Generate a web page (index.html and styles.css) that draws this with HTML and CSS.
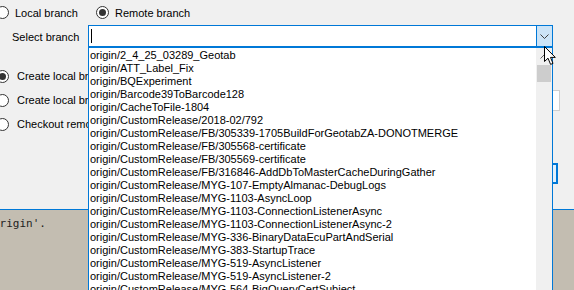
FILE: index.html
```html
<!DOCTYPE html>
<html lang="en">
<head>
    <meta charset="utf-8"/>
    <title>Checkout branch</title>
    <link rel="stylesheet" href="styles.css">
</head>
<body>
    <div class="window">
        <div class="row top">
            <label class="radio"><span class="dot"></span>Local branch</label>
            <label class="radio checked"><span class="dot"></span>Remote branch</label>
        </div>

        <div class="row select">
            <span class="caption">Select branch</span>
            <div class="combo">
                <div class="field"><span class="caret"></span></div>
                <div class="drop">
                    <svg width="9" height="5" viewBox="0 0 9 5"><path d="M0.5 0.5 L4.5 4.5 L8.5 0.5" fill="none" stroke="#404040" stroke-width="1"/></svg>
                </div>

                <div class="list">
                    <div class="items">
                        <div>origin/2_4_25_03289_Geotab</div>
                        <div>origin/ATT_Label_Fix</div>
                        <div>origin/BQExperiment</div>
                        <div>origin/Barcode39ToBarcode128</div>
                        <div>origin/CacheToFile-1804</div>
                        <div>origin/CustomRelease/2018-02/792</div>
                        <div>origin/CustomRelease/FB/305339-1705BuildForGeotabZA-DONOTMERGE</div>
                        <div>origin/CustomRelease/FB/305568-certificate</div>
                        <div>origin/CustomRelease/FB/305569-certificate</div>
                        <div>origin/CustomRelease/FB/316846-AddDbToMasterCacheDuringGather</div>
                        <div>origin/CustomRelease/MYG-107-EmptyAlmanac-DebugLogs</div>
                        <div>origin/CustomRelease/MYG-1103-AsyncLoop</div>
                        <div>origin/CustomRelease/MYG-1103-ConnectionListenerAsync</div>
                        <div>origin/CustomRelease/MYG-1103-ConnectionListenerAsync-2</div>
                        <div>origin/CustomRelease/MYG-336-BinaryDataEcuPartAndSerial</div>
                        <div>origin/CustomRelease/MYG-383-StartupTrace</div>
                        <div>origin/CustomRelease/MYG-519-AsyncListener</div>
                        <div>origin/CustomRelease/MYG-519-AsyncListener-2</div>
                        <div>origin/CustomRelease/MYG-564-BigQueryCertSubject</div>
                    </div>
                    <div class="scrollbar">
                        <div class="arrow">
                            <svg width="9" height="5" viewBox="0 0 9 5"><path d="M0.5 4.5 L4.5 0.5 L8.5 4.5" fill="none" stroke="#606060" stroke-width="1"/></svg>
                        </div>
                        <div class="thumb"></div>
                    </div>
                </div>
            </div>
        </div>

        <div class="options">
            <div class="choices">
                <label class="radio checked"><span class="dot"></span>Create local branch with name:</label>
                <label class="radio"><span class="dot"></span>Create local branch with the remote branch name</label>
                <label class="radio"><span class="dot"></span>Checkout remote branch</label>
            </div>
            <div class="side">
                <div class="textbox"></div>
                <div class="button"></div>
                <div class="grip"></div>
            </div>
        </div>

        <div class="output">
            <pre>origin'.</pre>
        </div>
    </div>

    <svg class="cursor" width="13" height="20" viewBox="0 0 13 20">
        <path d="M0.5 0.5 L0.5 15.5 L4 12.2 L6.6 18.4 L9 17.4 L6.5 11.4 L11.3 11.4 Z" fill="#fff" stroke="#000" stroke-width="1" stroke-linejoin="miter"/>
    </svg>
</body>
</html>
```

FILE: styles.css
```css
*{
    margin: 0;
    padding: 0;
    box-sizing: border-box;
}
body{
    width: 574px;
    height: 290px;
    overflow: hidden;
    background: #f0f0f0;
    font-family: "Liberation Sans", Arial, sans-serif;
    font-size: 11px;
    color: #000;
    position: relative;
}
.window{
    margin-left: -4px;
    width: 600px;
}
.row{
    display: flex;
    align-items: center;
}
.top{
    height: 25px;
    gap: 18px;
}
.radio{
    display: flex;
    align-items: center;
    gap: 6px;
    white-space: nowrap;
}
.dot{
    flex: none;
    width: 13px;
    height: 13px;
    border: 1px solid #333;
    border-radius: 50%;
    background: #fff;
    display: flex;
    align-items: center;
    justify-content: center;
}
.checked .dot::after{
    content: "";
    width: 7px;
    height: 7px;
    border-radius: 50%;
    background: #333;
}
.select{
    height: 23px;
}
.caption{
    width: 92px;
    padding-left: 16px;
}
.combo{
    position: relative;
    display: flex;
    width: 465px;
    height: 23px;
    background: #fff;
    border: 1px solid #0078d7;
    border-bottom-width: 2px;
}
.field{
    flex: 1;
    padding: 3px 0 0 2px;
}
.caret{
    display: block;
    width: 1px;
    height: 14px;
    background: #000;
}
.drop{
    width: 16px;
    background: #cce4f7;
    border-left: 1px solid #0078d7;
    display: flex;
    align-items: center;
    justify-content: center;
    padding-top: 1px;
}
.list{
    position: absolute;
    top: calc(100% + 2px);
    left: -1px;
    width: 465px;
    height: 260px;
    background: #fff;
    border: 1px solid #0078d7;
    border-top: none;
    display: flex;
    z-index: 2;
}
.items{
    flex: 1;
    padding: 1px 0 0 1px;
    line-height: 13px;
    white-space: nowrap;
    overflow: hidden;
}
.scrollbar{
    width: 16px;
    background: #f0f0f0;
    display: flex;
    flex-direction: column;
    align-items: center;
}
.arrow{
    height: 17px;
    display: flex;
    align-items: center;
}
.thumb{
    width: 14px;
    height: 17px;
    background: #cdcdcd;
}
.options{
    display: grid;
    grid-template-columns: 557px 1fr;
    height: 161px;
    padding-top: 16px;
}
.choices{
    display: flex;
    flex-direction: column;
    width: 92px;
    overflow: hidden;
}
.choices .radio{
    height: 24px;
    gap: 8px;
}
.side{
    display: flex;
    flex-direction: column;
}
.textbox{
    margin-top: 26px;
    width: 7px;
    height: 21px;
    background: #fff;
    border: 1px solid #cfcfcf;
    border-left: none;
}
.button{
    margin-top: 52px;
    width: 5px;
    height: 21px;
    background: #e5f1fb;
    border: 2px solid #0078d7;
    border-left: none;
}
.grip{
    margin: 18px 0 0 17px;
    width: 4px;
    height: 6px;
    background: radial-gradient(circle, #b5b5b5 45%, transparent 50%) 0 0 / 2px 2px;
}
.output{
    height: 90px;
    background: #c3bdb1;
    border-top: 1px solid #0078d7;
    padding-top: 7px;
}
.output pre{
    font-family: "DejaVu Sans Mono", Consolas, monospace;
    font-size: 11px;
    color: #1e1e1e;
    margin-left: -3px;
}
.cursor{
    position: absolute;
    left: 544px;
    top: 46px;
    z-index: 3;
}
```
